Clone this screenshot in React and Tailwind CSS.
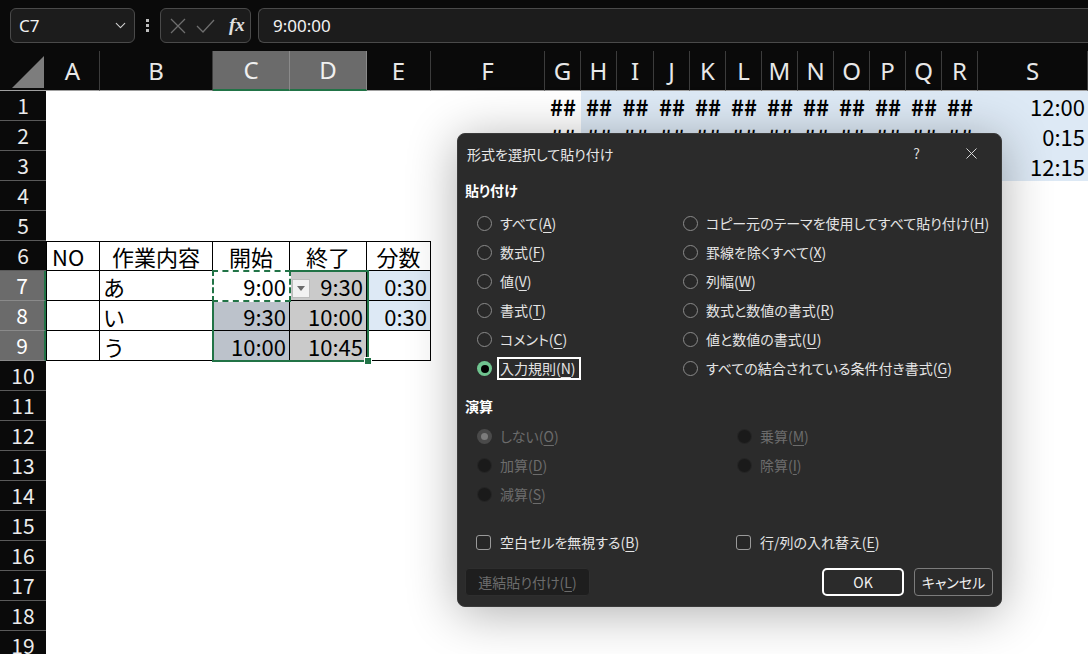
import { ChevronDown, X } from "lucide-react";

const COLS =
  "grid grid-cols-[46px_54px_113px_77px_77px_64px_114px_36px_36px_37px_36px_36px_36px_36px_36px_36px_36px_36px_36px_110px]";
const LETTERS = "ABCDEFGHIJKLMNOPQRS".split("");

const tableHead = ["NO", "作業内容", "開始", "終了", "分数"];
const tableBody = [
  ["", "あ", "9:00", "9:30", "0:30"],
  ["", "い", "9:30", "10:00", "0:30"],
  ["", "う", "10:00", "10:45", ""],
];

function cellInfo(r, c) {
  let text = "";
  let bg = r <= 3 && c >= 7 ? "bg-[#dde9f5]" : "bg-white";
  let align = "justify-end pr-[3px]";
  let border = "";

  // row 3 of G:R lies under the dialog
  if (r <= 2 && c >= 6 && c <= 17) {
    text = "##";
    align = "justify-center font-bold text-[19px]";
  }
  if (r <= 3 && c === 18) text = ["12:00", "0:15", "12:15"][r - 1];

  if (r >= 6 && r <= 9 && c <= 4) {
    border = "border-r border-b border-black";
    if (r === 6) border += " border-t";
    if (c === 0) border += " border-l";
    if (r === 6) {
      text = tableHead[c];
      align = c === 0 ? "justify-start pl-[5px]" : "justify-center";
    } else {
      text = tableBody[r - 7][c];
      if (c === 1) align = "justify-start pl-[3px]";
      if (c === 2 && r > 7) bg = "bg-[#bcc2cb]";
      if (c === 3) bg = "bg-[#cacaca]";
      if (c === 4 && r < 9) bg = "bg-[#dde9f5]";
    }
  }
  return { text, bg, align, border };
}

function Label({ text, k, dim }) {
  return (
    <span className={dim ? "text-[#6c6c6c]" : "text-[#e4e4e4]"}>
      {text}(<span className="underline underline-offset-[3px]">{k}</span>)
    </span>
  );
}

function Radio({ text, k, state = "off", focus }) {
  let circle;
  if (state === "on") {
    circle = (
      <span className="w-[15px] h-[15px] rounded-full bg-[#6fc48f] flex items-center justify-center shrink-0">
        <span className="w-[8px] h-[8px] rounded-full bg-black" />
      </span>
    );
  } else if (state === "dimOn") {
    circle = (
      <span className="w-[15px] h-[15px] rounded-full bg-[#4a4a4a] flex items-center justify-center shrink-0">
        <span className="w-[7px] h-[7px] rounded-full bg-[#7c7c7c]" />
      </span>
    );
  } else if (state === "dim") {
    circle = <span className="w-[15px] h-[15px] rounded-full bg-[#1a1a1a] border border-[#262626] shrink-0" />;
  } else {
    circle = <span className="w-[15px] h-[15px] rounded-full border border-[#8a8a8a] bg-[#282828] shrink-0" />;
  }
  const dim = state === "dim" || state === "dimOn";
  return (
    <div className="flex items-center h-[29px] gap-[8px]">
      {circle}
      {focus ? (
        <span className="border-2 border-white ml-[-3px] pl-[1px] pr-[3px] h-[23px] flex items-center">
          <Label text={text} k={k} dim={dim} />
        </span>
      ) : (
        <Label text={text} k={k} dim={dim} />
      )}
    </div>
  );
}

function CheckBox({ text, k }) {
  return (
    <div className="flex items-center h-[24px] gap-[9px]">
      <span className="w-[15px] h-[15px] rounded-[3px] border border-[#9a9a9a] bg-[#262626] shrink-0" />
      <Label text={text} k={k} />
    </div>
  );
}

function Dialog() {
  return (
    <div className="absolute left-[457px] top-[133px] w-[545px] h-[474px] rounded-[8px] bg-[#2b2b2b] border border-[#3a3a3a] shadow-[0_6px_50px_rgba(0,0,0,0.32)] text-[14px] [font-feature-settings:'palt'] text-[#e4e4e4]">
      <div className="h-[39px] flex items-center pl-[9px] pr-[20px]">
        <span className="flex-1 text-[#e8e8e8] pt-[1px]">形式を選択して貼り付け</span>
        <span className="text-[#d8d8d8] mr-[42px]">?</span>
        <X className="text-[#e0e0e0]" size={19} strokeWidth={1.2} />
      </div>

      <div className="mt-[7px] h-[20px] pl-[7px] font-bold text-white leading-[20px]">貼り付け</div>
      <div className="mt-[9px] pl-[19px] grid grid-cols-[206px_1fr]">
        <div>
          <Radio text="すべて" k="A" />
          <Radio text="数式" k="F" />
          <Radio text="値" k="V" />
          <Radio text="書式" k="T" />
          <Radio text="コメント" k="C" />
          <Radio text="入力規則" k="N" state="on" focus />
        </div>
        <div>
          <Radio text="コピー元のテーマを使用してすべて貼り付け" k="H" />
          <Radio text="罫線を除くすべて" k="X" />
          <Radio text="列幅" k="W" />
          <Radio text="数式と数値の書式" k="R" />
          <Radio text="値と数値の書式" k="U" />
          <Radio text="すべての結合されている条件付き書式" k="G" />
        </div>
      </div>

      <div className="mt-[13px] h-[20px] pl-[7px] font-bold text-white leading-[20px]">演算</div>
      <div className="mt-[6px] pl-[19px] grid grid-cols-[260px_1fr]">
        <div>
          <Radio text="しない" k="O" state="dimOn" />
          <Radio text="加算" k="D" state="dim" />
          <Radio text="減算" k="S" state="dim" />
        </div>
        <div>
          <Radio text="乗算" k="M" state="dim" />
          <Radio text="除算" k="I" state="dim" />
        </div>
      </div>

      <div className="mt-[21px] pl-[18px] grid grid-cols-[260px_1fr]">
        <CheckBox text="空白セルを無視する" k="B" />
        <CheckBox text="行/列の入れ替え" k="E" />
      </div>

      <div className="mt-[14px] pl-[7px] pr-[8px] flex justify-between">
        <div className="w-[125px] h-[28px] rounded-[4px] bg-[#1e1e1e] border border-[#2e2e2e] flex items-center justify-center">
          <Label text="連結貼り付け" k="L" dim />
        </div>
        <div className="flex gap-[10px]">
          <div className="w-[82px] h-[28px] rounded-[5px] border-2 border-white flex items-center justify-center text-[#f0f0f0]">OK</div>
          <div className="w-[79px] h-[28px] rounded-[4px] border border-[#7c7c7c] flex items-center justify-center text-[#f0f0f0]">キャンセル</div>
        </div>
      </div>
    </div>
  );
}

export default function App() {
  const rows = Array.from({ length: 19 }, (_, i) => i + 1);
  return (
    <div className="relative w-[1088px] h-[654px] overflow-hidden bg-white font-['Noto_Sans_CJK_JP',sans-serif]">
      {/* formula bar */}
      <div className="h-[51px] bg-[#0a0a0a] flex items-center pl-[10px]">
        <div className="w-[125px] h-[35px] rounded-[6px] border border-[#4a4a4a] bg-[#1c1c1c] flex items-center justify-between pl-[8px] pr-[5px] text-[17px] text-[#f2f2f2] font-['Noto_Sans',sans-serif]">
          <span>C7</span>
          <ChevronDown size={17} strokeWidth={1.5} className="text-[#d0d0d0]" />
        </div>
        <div className="ml-[11px] flex flex-col gap-[2px]">
          <span className="w-[3px] h-[3px] bg-[#bdbdbd]" />
          <span className="w-[3px] h-[3px] bg-[#bdbdbd]" />
          <span className="w-[3px] h-[3px] bg-[#bdbdbd]" />
        </div>
        <div className="ml-[11px] w-[91px] h-[35px] rounded-[6px] border border-[#4a4a4a] bg-[#1c1c1c] flex items-center pl-[9px]">
          <svg width="16" height="16" viewBox="0 0 16 16" fill="none" stroke="#6e6e6e" strokeWidth="1.3">
            <path d="M1 1 L15 15 M15 1 L1 15" />
          </svg>
          <svg className="ml-[10px]" width="19" height="14" viewBox="0 0 19 14" fill="none" stroke="#6e6e6e" strokeWidth="1.3">
            <path d="M1 7 L7 13 L18 1" />
          </svg>
          <span className="ml-[14px] font-['Liberation_Serif',serif] italic font-bold text-[19px] text-[#e0e0e0]">fx</span>
        </div>
        <div className="ml-[7px] flex-1 h-[35px] rounded-l-[6px] border border-r-0 border-[#4a4a4a] bg-[#1c1c1c] flex items-center pl-[14px] text-[17px] text-[#f2f2f2] font-['Noto_Sans',sans-serif]">
          9:00:00
        </div>
      </div>

      {/* column header */}
      <div className={`${COLS} h-[40px] bg-[#0a0a0a]`}>
        <div className="border-b border-[#a0a0a0] flex items-end justify-end pr-[2px] pb-[2px]">
          <svg width="32" height="32" viewBox="0 0 32 32">
            <polygon points="32,0 32,32 0,32" fill="#7d7d7d" />
          </svg>
        </div>
        {LETTERS.map((l, i) => {
          const sel = i === 2 || i === 3;
          return (
            <div
              key={l}
              className={
                sel
                  ? "bg-[#6b6b6b] border-r border-[#8a8a8a] border-b-2 border-b-[#217346] flex items-center justify-center text-[24px] text-[#f0f0f0] font-['Noto_Sans',sans-serif]"
                  : "border-r border-[#3c3c3c] border-b border-b-[#a0a0a0] flex items-center justify-center text-[24px] text-[#e8e8e8] font-['Noto_Sans',sans-serif]"
              }
            >
              {l}
            </div>
          );
        })}
      </div>

      {/* grid body */}
      <div className={`${COLS} auto-rows-[30px]`}>
        {rows.map((r) => {
          const sel = r >= 7 && r <= 9;
          return [
            <div
              key={`h${r}`}
              className={
                sel
                  ? "bg-[#6b6b6b] border-b border-[#8a8a8a] border-r-2 border-r-[#217346] flex items-center justify-center text-[21px] text-white leading-none"
                  : "bg-[#0a0a0a] border-b border-[#5a5a5a] flex items-center justify-center text-[21px] text-[#ececec] leading-none"
              }
            >
              {r}
            </div>,
            ...LETTERS.map((l, c) => {
              const info = cellInfo(r, c);
              return (
                <div
                  key={`${l}${r}`}
                  className={`${info.bg} ${info.border} ${info.align} flex items-center text-[22px] text-black leading-none whitespace-nowrap`}
                >
                  {info.text}
                </div>
              );
            }),
          ];
        })}
      </div>

      {/* selection C7:D9 */}
      <div className="absolute left-[212px] top-[270px] w-[157px] h-[92px] border-2 border-[#217346]" />
      <div className="absolute left-[212px] top-[270px] w-[79px] h-[32px] border-2 border-white">
        <div className="absolute -inset-[2px] border-2 border-dashed border-[#217346]" />
      </div>
      <div className="absolute left-[365px] top-[358px] w-[6px] h-[6px] bg-[#217346] outline outline-1 outline-white" />

      {/* validation dropdown button */}
      <div className="absolute left-[292px] top-[279px] w-[18px] h-[19px] bg-[#f2f2f2] border border-[#bdbdbd] flex items-center justify-center">
        <svg width="8" height="5" viewBox="0 0 8 5">
          <polygon points="0,0 8,0 4,5" fill="#6b6b6b" />
        </svg>
      </div>

      <Dialog />
    </div>
  );
}
